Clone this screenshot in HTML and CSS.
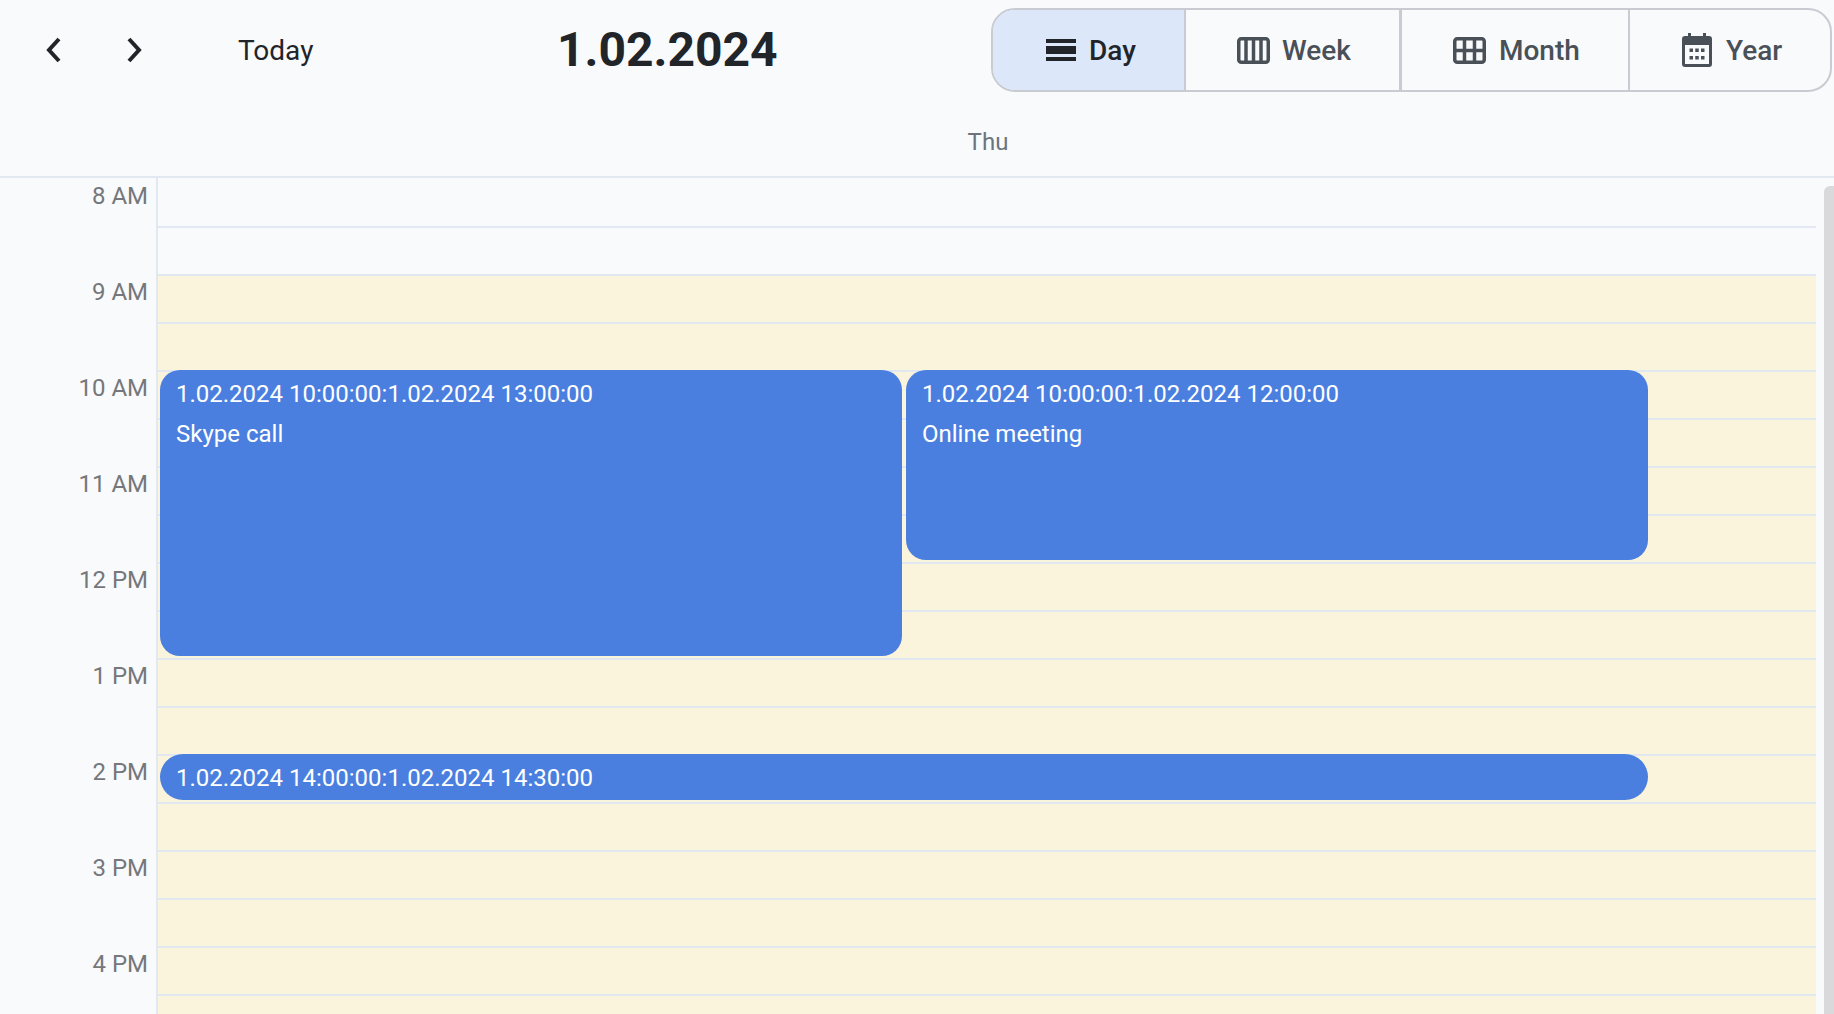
FILE: index.html
```html
<!DOCTYPE html>
<html lang="en">
<head>
<meta charset="utf-8">
<title>Calendar</title>
<link rel="stylesheet" href="styles.css">
</head>
<body>
<div class="app">
  <header class="head">
    <div class="toolbar">
      <div class="nav">
        <button class="nav-btn nav-prev" aria-label="Previous"><svg width="16" height="26" viewBox="0 0 16 26"><path d="M13 2 3 13l10 11" class="chev"/></svg></button>
        <button class="nav-btn nav-next" aria-label="Next"><svg width="16" height="26" viewBox="0 0 16 26"><path d="M3 2l10 11L3 24" class="chev"/></svg></button>
        <span class="today">Today</span>
      </div>
      <h1 class="title">1.02.2024</h1>
      <div class="views">
        <div class="view view-day active">
          <svg width="30" height="22" viewBox="0 0 30 22"><path class="solid" d="M0 0h30v4H0zM0 7h30v8H0zM0 18h30v4H0z"/></svg>
          <span>Day</span>
        </div>
        <div class="view view-week">
          <svg width="33" height="27" viewBox="0 0 33 27"><rect class="line" x="1.750" y="1.750" width="29.500" height="23.500" rx="2.500"/><path class="line" d="M9 2v23M16.500 2v23M24 2v23"/></svg>
          <span>Week</span>
        </div>
        <div class="view view-month">
          <svg width="33" height="27" viewBox="0 0 33 27"><rect class="line" x="1.750" y="1.750" width="29.500" height="23.500" rx="2.500"/><path class="line" d="M11.500 2v23M21.500 2v23M2 13.500h29"/></svg>
          <span>Month</span>
        </div>
        <div class="view view-year">
          <svg width="30" height="34" viewBox="0 0 30 34"><path class="solid" fill-rule="evenodd" d="M6 0h3v3h12V0h3v3h3a3 3 0 0 1 3 3v25a3 3 0 0 1-3 3H3a3 3 0 0 1-3-3V6a3 3 0 0 1 3-3h3zM3 12v19h24V12z"/><path class="solid" d="M7.500 15.500h3.500v3.500H7.500zM13.250 15.500h3.500v3.500h-3.500zM19 15.500h3.500v3.500H19zM7.500 23h3.500v3.500H7.500zM13.250 23h3.500v3.500h-3.500zM19 23h3.500v3.500H19z"/></svg>
          <span>Year</span>
        </div>
      </div>
    </div>
    <div class="weekday">Thu</div>
  </header>
  <main class="body">
    <div class="gutter">
      <div class="hour">8 AM</div>
      <div class="hour">9 AM</div>
      <div class="hour">10 AM</div>
      <div class="hour">11 AM</div>
      <div class="hour">12 PM</div>
      <div class="hour">1 PM</div>
      <div class="hour">2 PM</div>
      <div class="hour">3 PM</div>
      <div class="hour">4 PM</div>
    </div>
    <div class="grid">
      <div class="slot off"></div>
      <div class="slot off"></div>
      <div class="slot"></div><div class="slot"></div>
      <div class="slot"></div><div class="slot"></div>
      <div class="slot"></div><div class="slot"></div>
      <div class="slot"></div><div class="slot"></div>
      <div class="slot"></div><div class="slot"></div>
      <div class="slot"></div><div class="slot"></div>
      <div class="slot"></div><div class="slot"></div>
      <div class="slot"></div><div class="slot"></div>
      <div class="event ev-skype">
        <div class="ev-time">1.02.2024 10:00:00:1.02.2024 13:00:00</div>
        <div class="ev-title">Skype call</div>
      </div>
      <div class="event ev-online">
        <div class="ev-time">1.02.2024 10:00:00:1.02.2024 12:00:00</div>
        <div class="ev-title">Online meeting</div>
      </div>
      <div class="event ev-short">
        <div class="ev-time">1.02.2024 14:00:00:1.02.2024 14:30:00</div>
      </div>
    </div>
    <div class="scroll"><div class="thumb"></div></div>
  </main>
</div>
</body>
</html>
```
FILE: styles.css
```css
* { box-sizing: border-box; }
html, body { margin: 0; height: 100%; overflow: hidden; }
body { background: #f9fafc; font-family: Roboto, "Liberation Sans", sans-serif; color: #212529; }
.app { height: 1014px; display: flex; flex-direction: column; overflow: hidden; }

.head { height: 178px; border-bottom: 2px solid #e2e8ef; flex: none; }
.toolbar { height: 92px; padding-top: 8px; display: flex; align-items: stretch; }
.nav { width: 557px; display: flex; align-items: center; flex: none; }
.nav-btn { background: none; border: 0; padding: 0; display: flex; }
.nav-prev { margin-left: 46px; }
.nav-next { margin-left: 64px; }
.chev { fill: none; stroke: #212529; stroke-width: 4; }
.today { margin-left: 96px; padding-top: 1px; font-size: 28px; }
.title { margin: 0; width: 434px; flex: none; font-size: 48px; font-weight: 700; line-height: 84px; }

.views { width: 841px; flex: none; display: flex; border: 2px solid #c9cbd3; border-radius: 24px; overflow: hidden; }
.view { display: flex; align-items: center; gap: 13px; font-size: 28px; font-weight: 500; color: #495057; }
.view svg { flex: none; }
.solid { fill: currentColor; }
.line { fill: none; stroke: currentColor; stroke-width: 3.500; }
.active { background: #dce7fa; color: #212529; }
.view-day { width: 193px; padding-left: 53px; border-right: 2px solid #c9cbd3; }
.view-week { width: 216px; padding-left: 51px; gap: 12px; border-right: 3px solid #c9cbd3; }
.view-month { width: 228px; padding-left: 51px; border-right: 2px solid #c9cbd3; }
.view-year { flex: 1; padding-left: 52px; gap: 14px; }

.weekday { padding: 36px 16px 0 158px; text-align: center; font-size: 24px; color: #6c757d; line-height: 28px; }

.body { flex: 1; display: flex; min-height: 0; }
.gutter { width: 158px; flex: none; border-right: 2px solid #e2e8ef; }
.hour { height: 96px; padding: 3px 8px 0 0; text-align: right; font-size: 24px; line-height: 30px; color: #75777b; }

.grid { position: relative; width: 1658px; flex: none; }
.slot { height: 48px; background: #faf4dc; border-top: 2px solid #e2e8f1; }
.slot.off { background: #f9fafc; }
.slot:first-child { border-top: 0; }

.event { position: absolute; background: #4a7fe0; color: #fff; border-radius: 20px; padding: 10px 16px; font-size: 24px; line-height: 28px; width: 742px; }
.ev-title { margin-top: 12px; }
.ev-skype { left: 2px; top: 192px; height: 286px; }
.ev-online { left: 748px; top: 192px; height: 190px; }
.ev-short { left: 2px; top: 576px; height: 46px; width: 1488px; border-radius: 23px; }

.scroll { flex: 1; display: flex; justify-content: flex-end; }
.thumb { width: 10px; margin-top: 8px; background: #d9d9db; border-top-left-radius: 6px; }
```
